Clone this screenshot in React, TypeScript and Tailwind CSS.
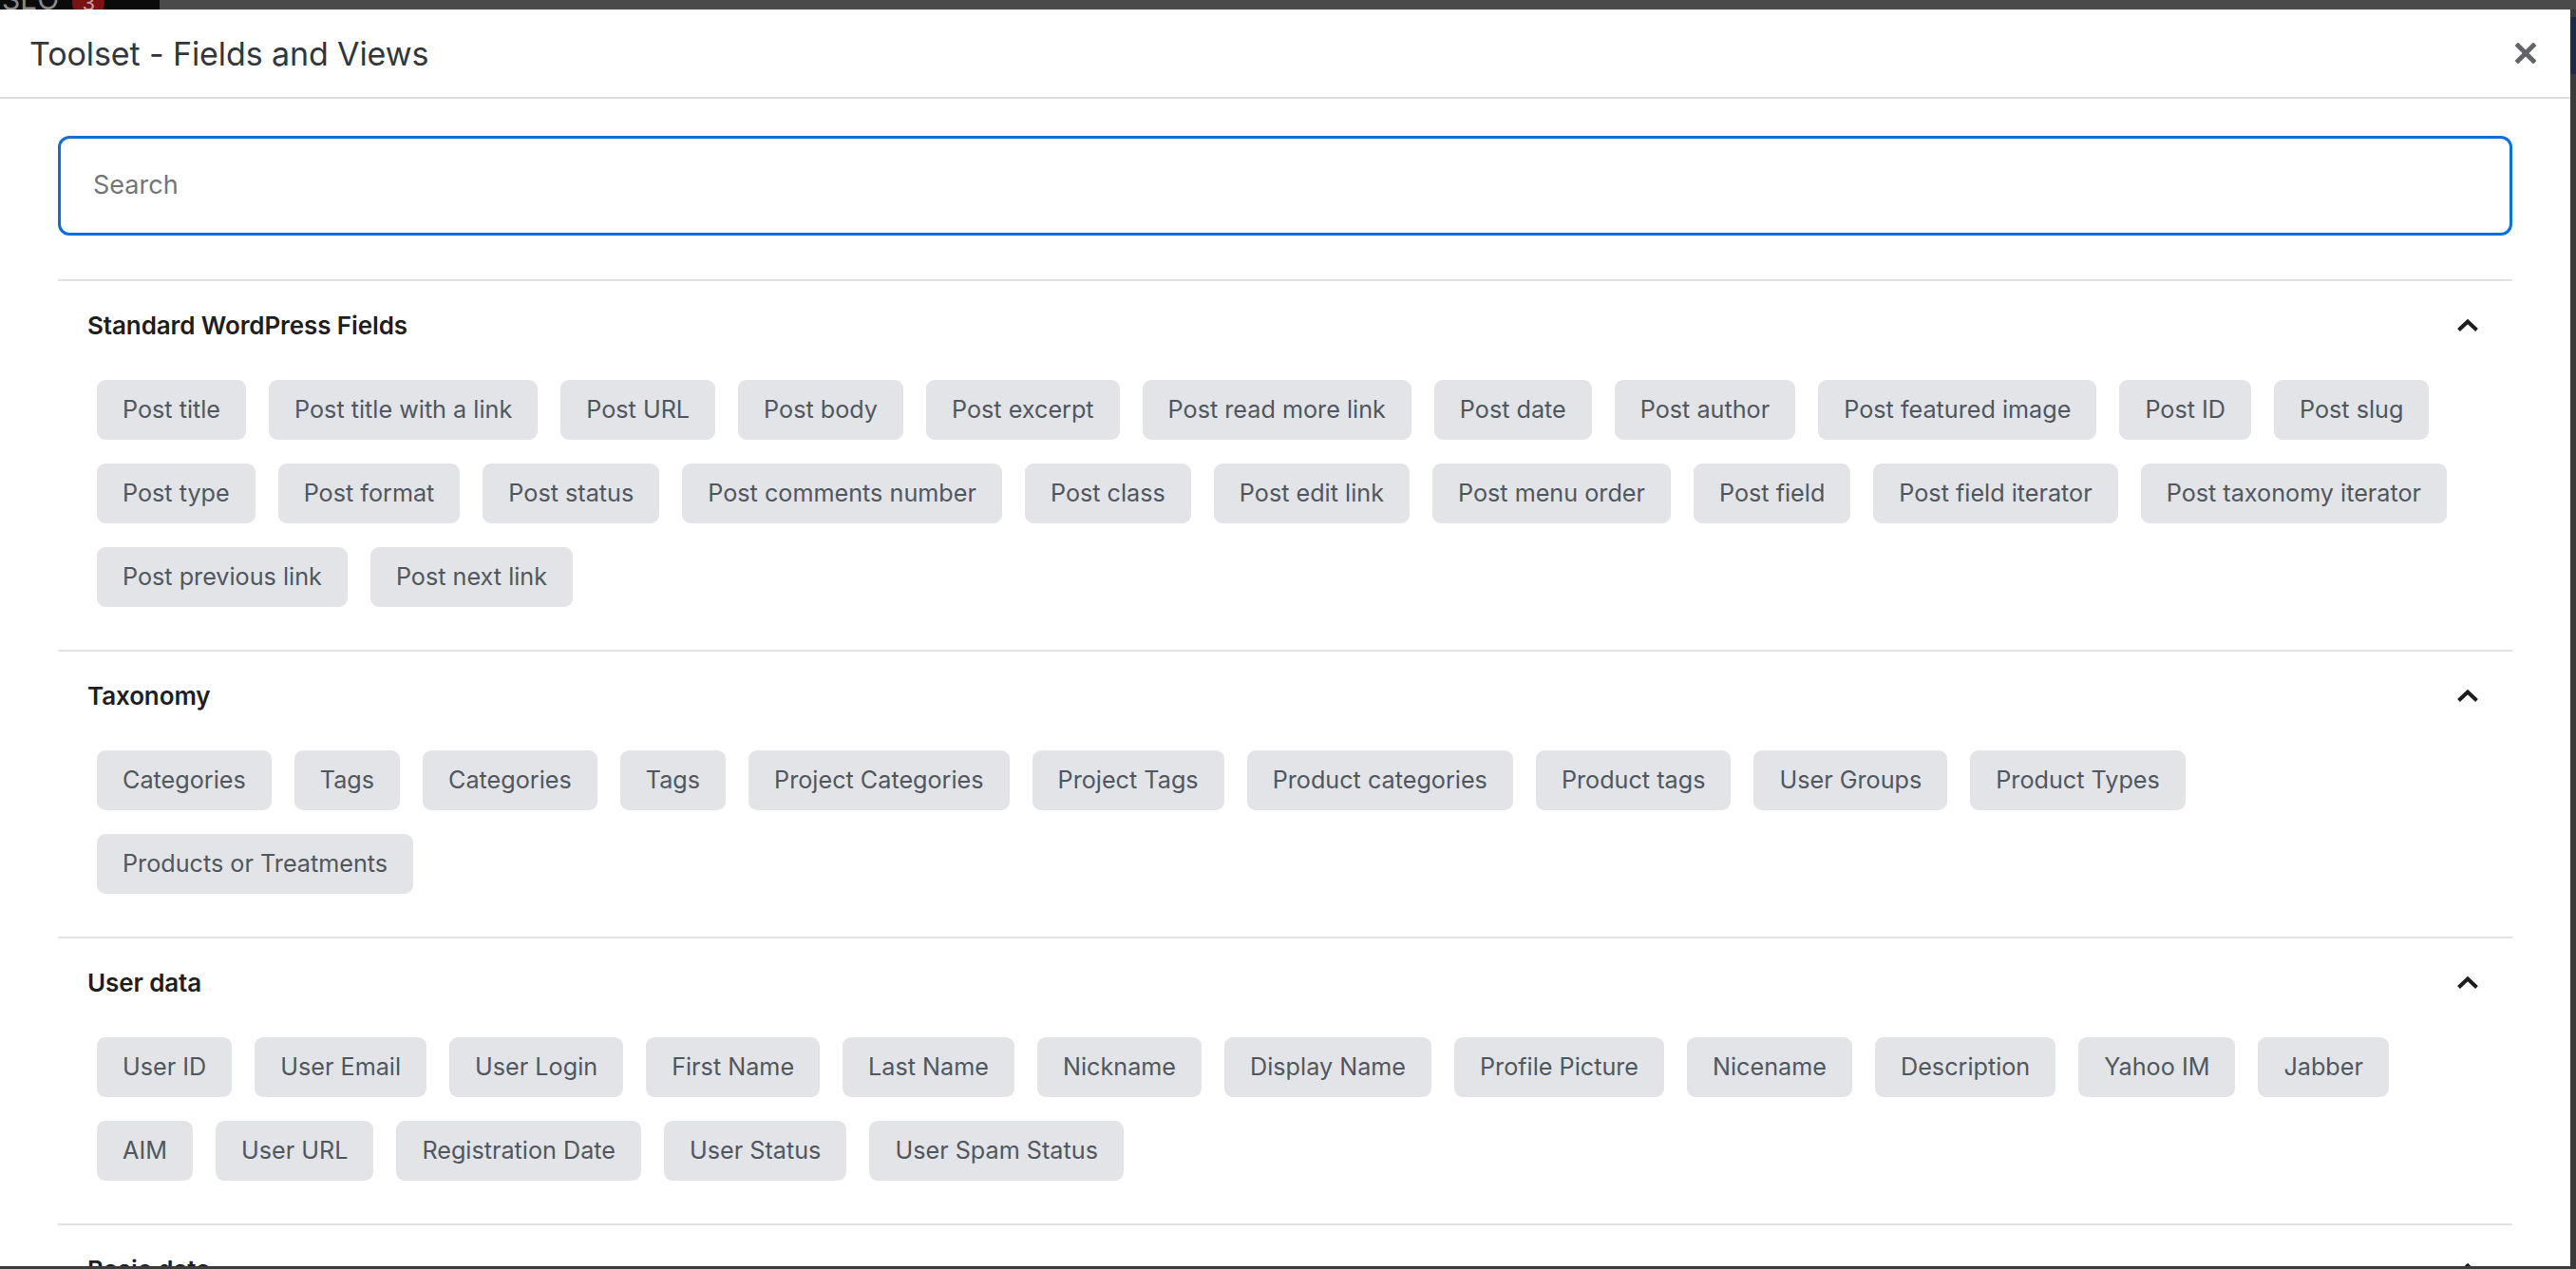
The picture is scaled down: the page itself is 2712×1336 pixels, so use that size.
import * as React from 'react'

// Field groups, one array per visual row
const sections: { title: string; rows: string[][] }[] = [
  {
    title: 'Standard WordPress Fields',
    rows: [
      ['Post title', 'Post title with a link', 'Post URL', 'Post body', 'Post excerpt', 'Post read more link', 'Post date', 'Post author', 'Post featured image', 'Post ID', 'Post slug'],
      ['Post type', 'Post format', 'Post status', 'Post comments number', 'Post class', 'Post edit link', 'Post menu order', 'Post field', 'Post field iterator', 'Post taxonomy iterator'],
      ['Post previous link', 'Post next link'],
    ],
  },
  {
    title: 'Taxonomy',
    rows: [
      ['Categories', 'Tags', 'Categories', 'Tags', 'Project Categories', 'Project Tags', 'Product categories', 'Product tags', 'User Groups', 'Product Types'],
      ['Products or Treatments'],
    ],
  },
  {
    title: 'User data',
    rows: [
      ['User ID', 'User Email', 'User Login', 'First Name', 'Last Name', 'Nickname', 'Display Name', 'Profile Picture', 'Nicename', 'Description', 'Yahoo IM', 'Jabber'],
      ['AIM', 'User URL', 'Registration Date', 'User Status', 'User Spam Status'],
    ],
  },
  {
    title: 'Basic data',
    rows: [['Site name', 'Site URL', 'Home URL', 'Current page']],
  },
]

function ChevronUp() {
  return (
    <svg width="24" height="15" viewBox="0 0 24 15" fill="none">
      <polyline points="2.5,12.5 12,3.5 21.5,12.5" stroke="#1e1e1e" strokeWidth="4" strokeLinecap="butt" strokeLinejoin="miter" />
    </svg>
  )
}

function CloseIcon() {
  return (
    <svg width="22" height="22" viewBox="0 0 22 22">
      <path d="M3 3 L19 19 M19 3 L3 19" stroke="#62666b" strokeWidth="5" strokeLinecap="square" />
    </svg>
  )
}

function Section({ title, rows }: { title: string; rows: string[][] }) {
  return (
    <section className="border-t-2 border-[#e2e2e2]">
      {/* Header */}
      <div className="h-[92px] flex items-center justify-between pl-[31px] pr-[35px]">
        <h2 className="text-[26px] font-semibold text-[#1e1e1e] tracking-[-0.1px]">{title}</h2>
        <ChevronUp />
      </div>
      {/* Field buttons */}
      <div className="pl-[41px] pt-[12px] pb-[45px] flex flex-col gap-y-[25px]">
        {rows.map((row, i) => (
          <div key={i} className="flex gap-x-[24px]">
            {row.map((label, j) => (
              <button
                key={j}
                className="h-[63px] px-[27px] rounded-[9px] bg-[#e3e4e7] text-[25.2px] text-[#50575e] whitespace-nowrap"
              >
                {label}
              </button>
            ))}
          </div>
        ))}
      </div>
    </section>
  )
}

export default function App() {
  return (
    <div
      className="w-[2712px] h-[1336px] bg-[#3c3c3c] flex flex-col overflow-hidden"
      style={{ fontFamily: 'Inter, "Noto Sans", sans-serif' }}
    >
      {/* Top: page behind the modal */}
      <div className="h-[10px] flex shrink-0 overflow-hidden bg-[#4a4a4a]">
        <div className="w-[168px] bg-[#0b0b0b] flex items-end gap-[14px] pl-[2px] overflow-hidden">
          <span className="text-[30px] leading-[30px] text-[#8a8a8a] -mb-[4px]">SEO</span>
          <span className="w-[34px] h-[34px] rounded-full bg-[#7a1216] -mb-[10px] text-[22px] text-[#c7a0a0] flex items-center justify-center">3</span>
        </div>
      </div>

      <div className="flex flex-1 min-h-0">
        {/* Modal */}
        <div className="flex-1 bg-white flex flex-col min-h-0 mb-[3px]">
          <header className="h-[94px] shrink-0 border-b-2 border-[#dcdcde] flex items-center justify-between pl-[31px] pr-[36px]">
            <h1 className="text-[34px] text-[#32373c] tracking-[-0.1px]">Toolset - Fields and Views</h1>
            <CloseIcon />
          </header>

          <div className="flex-1 min-h-0 overflow-hidden px-[61px] pt-[39px]">
            <div className="h-[105px] rounded-[12px] border-[3px] border-[#0b6fdf] flex items-center pl-[34px]">
              <input
                type="text"
                placeholder="Search"
                className="w-full bg-transparent text-[27px] text-[#3c434a] placeholder:text-[#757575] outline-none"
              />
            </div>

            <div className="mt-[46px]">
              {sections.map((s) => (
                <Section key={s.title} title={s.title} rows={s.rows} />
              ))}
            </div>
          </div>
        </div>

        {/* Right edge of the page behind */}
        <div className="w-[6px] flex flex-col">
          <div className="h-[8px] bg-[#3c3c3c]" />
          <div className="h-[60px] bg-[#1d2c40]" />
          <div className="flex-1 bg-[#3a3a3a]" />
        </div>
      </div>
    </div>
  )
}
